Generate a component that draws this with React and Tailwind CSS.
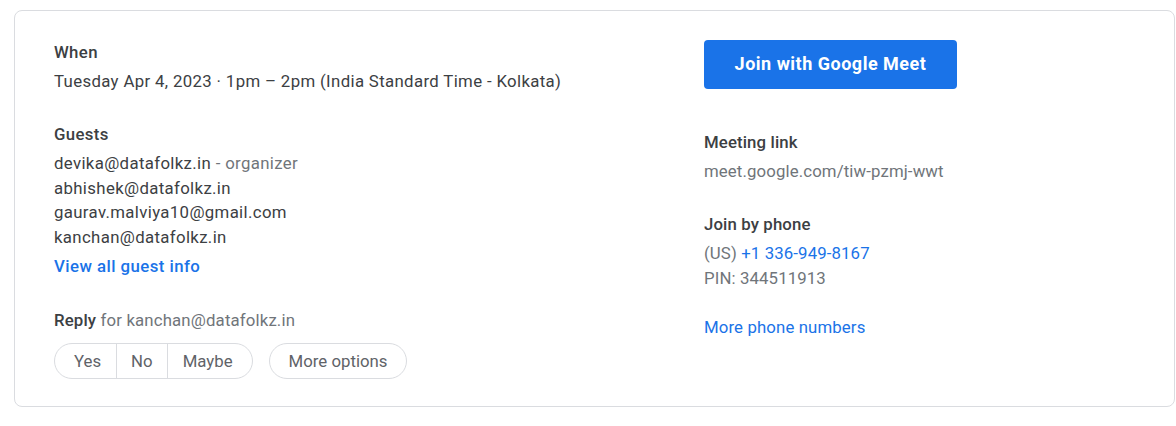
import React from 'react';

const guests = [
  { email: 'devika@datafolkz.in', note: 'organizer' },
  { email: 'abhishek@datafolkz.in' },
  { email: 'gaurav.malviya10@gmail.com' },
  { email: 'kanchan@datafolkz.in' },
];

const App = () => {
  return (
    <div className="min-h-screen bg-white pt-[10px] pl-[14px] font-['Roboto',sans-serif] text-[16.8px] leading-[24.5px] text-[#3c4043]">
      <div className="w-[1161px] h-[397px] border border-[#dadce0] rounded-lg pt-[29px] pl-[39px] flex">
        {/* left column */}
        <div className="w-[650px] tracking-[0.35px]">
          <div className="font-medium">When</div>
          <div className="mt-[4.5px]">Tuesday Apr 4, 2023 · 1pm – 2pm (India Standard Time - Kolkata)</div>

          <div className="mt-[28.5px] font-medium">Guests</div>
          <div className="mt-[4.5px]">
            {guests.map((g) => (
              <div key={g.email}>
                {g.email}
                {g.note && <span className="text-[#70757a]"> - {g.note}</span>}
              </div>
            ))}
          </div>
          <div className="mt-[4.5px] font-medium text-[#1a73e8] tracking-[0.45px]">View all guest info</div>

          <div className="mt-[29.5px] tracking-[0.15px]">
            <span className="font-medium">Reply</span>
            <span className="text-[#70757a]"> for kanchan@datafolkz.in</span>
          </div>
          <div className="mt-[11px] flex gap-4 text-[#5f6368] tracking-normal">
            <div className="flex h-[36px] rounded-full border border-[#dadce0]">
              <div className="flex items-center pl-[19px] pr-[15px] border-r border-[#dadce0]">Yes</div>
              <div className="flex items-center px-[14px] border-r border-[#dadce0]">No</div>
              <div className="flex items-center pl-[15px] pr-[19px]">Maybe</div>
            </div>
            <div className="flex items-center h-[36px] rounded-full border border-[#dadce0] px-[19px]">More options</div>
          </div>
        </div>

        {/* right column */}
        <div className="flex-1 tracking-[0.12px]">
          <button className="w-[253px] h-[49px] rounded-[4px] bg-[#1a73e8] text-white font-bold text-[18px] tracking-[0.5px]">
            Join with Google Meet
          </button>

          <div className="mt-[41px] font-medium">Meeting link</div>
          <div className="mt-[4.5px] text-[#70757a]">meet.google.com/tiw-pzmj-wwt</div>

          <div className="mt-[28.5px] font-medium">Join by phone</div>
          <div className="mt-[4.5px] text-[#70757a]">
            (US) <span className="text-[#1a73e8]">+1 336-949-8167</span>
          </div>
          <div className="text-[#70757a]">PIN: 344511913</div>

          <div className="mt-[24.5px] text-[#1a73e8]">More phone numbers</div>
        </div>
      </div>
    </div>
  );
};

export default App;
